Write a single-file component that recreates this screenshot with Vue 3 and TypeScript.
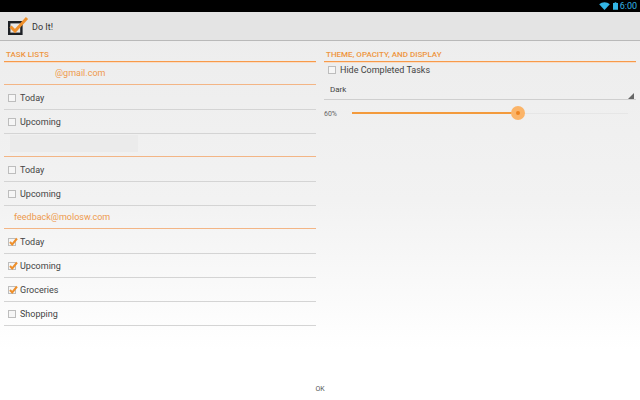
<template>
  <div class="screen">
    <!-- Status bar -->
    <div class="status-bar">
      <svg class="wifi" viewBox="0 0 12 9" width="11" height="8">
        <path d="M0 2.6 C3.4 -0.6 8.6 -0.6 12 2.6 L6 9 Z" fill="#33b5e5" />
      </svg>
      <svg class="battery" viewBox="0 0 6 9" width="5" height="8">
        <path d="M2 0 H4 V1 H6 V9 H0 V1 H2 Z" fill="#33b5e5" />
      </svg>
      <span class="clock">6:00</span>
    </div>

    <!-- Action bar -->
    <header class="action-bar">
      <svg class="logo" viewBox="0 0 22 22" width="22" height="22">
        <rect x="2.2" y="7.2" width="12.2" height="11.6" fill="#e8e8e8" stroke="#1d2025" stroke-width="2.4" />
        <path d="M3.5 11.5 L8 16 L20 3" fill="none" stroke="#ee8f2b" stroke-width="3" />
      </svg>
      <span class="app-title">Do It!</span>
    </header>

    <main class="content">
      <section class="col">
        <h2 class="section-title">TASK LISTS</h2>
        <template v-for="(row, i) in rows" :key="i">
          <div v-if="row.kind === 'account'" class="row account" :style="{ paddingLeft: row.indent + 'px' }">
            {{ row.label }}
          </div>
          <div v-else-if="row.kind === 'blank'" class="row account blank">
            <div class="redacted"></div>
          </div>
          <div v-else class="row task">
            <span class="box">
              <svg v-if="row.checked" class="tick" viewBox="0 0 10 10" width="10" height="10">
                <path d="M2 5 L4.2 7.4 L9 1.5" fill="none" stroke="#ee8f2b" stroke-width="2" />
              </svg>
            </span>
            {{ row.label }}
          </div>
        </template>
      </section>

      <section class="col">
        <h2 class="section-title">THEME, OPACITY, AND DISPLAY</h2>
        <div class="hide-row">
          <span class="box"></span>
          Hide Completed Tasks
        </div>
        <div class="spinner">
          Dark
          <span class="spinner-arrow"></span>
        </div>
        <div class="opacity-row">
          <span class="pct">{{ opacity }}%</span>
          <div class="slider">
            <div class="slider-fill" :style="{ width: opacity + '%' }"></div>
            <div class="slider-rest"></div>
            <span class="thumb" :style="{ left: `calc(${opacity}% - 7px)` }"><span class="thumb-dot"></span></span>
          </div>
        </div>
      </section>
    </main>

    <footer class="footer">OK</footer>
  </div>
</template>

<script setup lang="ts">
interface Row {
  kind: 'account' | 'blank' | 'task'
  label?: string
  checked?: boolean
  indent?: number
}

const opacity = 60

const rows: Row[] = [
  { kind: 'account', label: '@gmail.com', indent: 51 },
  { kind: 'task', label: 'Today' },
  { kind: 'task', label: 'Upcoming' },
  { kind: 'blank' },
  { kind: 'task', label: 'Today' },
  { kind: 'task', label: 'Upcoming' },
  { kind: 'account', label: 'feedback@molosw.com', indent: 10 },
  { kind: 'task', label: 'Today', checked: true },
  { kind: 'task', label: 'Upcoming', checked: true },
  { kind: 'task', label: 'Groceries', checked: true },
  { kind: 'task', label: 'Shopping' }
]
</script>

<style>
html,
body {
  margin: 0;
  padding: 0;
}
</style>

<style scoped>
.screen {
  width: 640px;
  height: 400px;
  display: flex;
  flex-direction: column;
  overflow: hidden;
  font-family: Roboto, "Liberation Sans", sans-serif;
  background: linear-gradient(#ececec 0, #f2f2f2 200px, #ffffff 350px);
}

.status-bar {
  height: 12px;
  flex: none;
  background: #000;
  display: flex;
  align-items: center;
  justify-content: flex-end;
  padding-right: 3px;
}

.battery {
  margin-left: 3px;
}

.clock {
  font-size: 9px;
  line-height: 12px;
  color: #33b5e5;
  margin-left: 2px;
}

.action-bar {
  height: 28px;
  flex: none;
  display: flex;
  align-items: center;
  padding-left: 7px;
  background: #e4e4e4;
  border-bottom: 1px solid #b9b9b9;
  box-sizing: content-box;
}

.app-title {
  font-size: 9px;
  color: #333;
  margin: 1px 0 0 3px;
}

.content {
  flex: 1;
  display: flex;
  gap: 8px;
  padding: 0 4px;
}

.col {
  flex: 1;
  min-width: 0;
}

.section-title {
  margin: 0;
  height: 21px;
  box-sizing: border-box;
  padding: 9px 0 0 2px;
  font-size: 8px;
  line-height: 10px;
  font-weight: 500;
  color: #ee9540;
  border-bottom: 1px solid #f79a4a;
  box-shadow: 0 1px 0 #f9dcc4;
}

.row {
  box-sizing: border-box;
  height: 24px;
  display: flex;
  align-items: center;
  font-size: 9px;
  color: #444;
}

.account {
  height: 23px;
  margin-bottom: 1px;
  color: #ee9a4d;
  border-bottom: 1px solid #f3b585;
}

.blank {
  align-items: flex-start;
  padding: 1px 0 0 6px;
}

.redacted {
  width: 128px;
  height: 17px;
  background: #ebebeb;
}

.task {
  border-bottom: 1px solid #d4d4d4;
}

.box {
  position: relative;
  box-sizing: border-box;
  width: 8px;
  height: 8px;
  margin: 0 4px;
  flex: none;
  background: #f6f6f6;
  border: 1px solid #bdbdbd;
}

.tick {
  position: absolute;
  left: -1px;
  top: -2px;
}

.hide-row {
  height: 16px;
  display: flex;
  align-items: center;
  font-size: 9px;
  color: #444;
}

.spinner {
  position: relative;
  height: 22px;
  box-sizing: border-box;
  padding: 1px 0 0 6px;
  display: flex;
  align-items: center;
  font-size: 8px;
  color: #444;
  border-bottom: 1px solid #cfcfcf;
}

.spinner-arrow {
  position: absolute;
  right: 2px;
  bottom: 0;
  width: 0;
  height: 0;
  border-left: 6px solid transparent;
  border-bottom: 6px solid #666;
}

.opacity-row {
  margin-top: 3px;
  height: 20px;
  display: flex;
  align-items: center;
}

.pct {
  width: 28px;
  margin-top: 1px;
  font-size: 7px;
  color: #666;
  flex: none;
}

.slider {
  position: relative;
  flex: none;
  width: 276px;
  height: 14px;
  display: flex;
  align-items: center;
}

.slider-fill {
  height: 2px;
  background: #f39a3c;
  flex: none;
}

.slider-rest {
  flex: 1;
  height: 1px;
  background: #e6e6e6;
}

.thumb {
  position: absolute;
  top: 0;
  width: 14px;
  height: 14px;
  border-radius: 50%;
  background: #fbb468;
  display: flex;
  align-items: center;
  justify-content: center;
}

.thumb-dot {
  width: 4px;
  height: 4px;
  border-radius: 50%;
  background: #ee8420;
}

.footer {
  flex: none;
  height: 22px;
  padding-top: 2px;
  display: flex;
  align-items: center;
  justify-content: center;
  font-size: 7px;
  color: #555;
}
</style>
